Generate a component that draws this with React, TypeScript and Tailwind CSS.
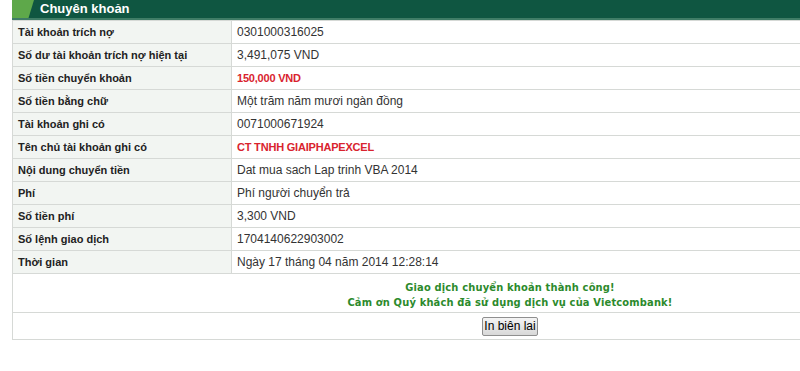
const rows: { label: string; value: string; red?: boolean }[] = [
  { label: "Tài khoản trích nợ", value: "0301000316025" },
  { label: "Số dư tài khoản trích nợ hiện tại", value: "3,491,075 VND" },
  { label: "Số tiền chuyển khoản", value: "150,000 VND", red: true },
  { label: "Số tiền bằng chữ", value: "Một trăm năm mươi ngàn đồng" },
  { label: "Tài khoản ghi có", value: "0071000671924" },
  { label: "Tên chủ tài khoản ghi có", value: "CT TNHH GIAIPHAPEXCEL", red: true },
  { label: "Nội dung chuyển tiền", value: "Dat mua sach Lap trinh VBA 2014" },
  { label: "Phí", value: "Phí người chuyển trả" },
  { label: "Số tiền phí", value: "3,300 VND" },
  { label: "Số lệnh giao dịch", value: "1704140622903002" },
  { label: "Thời gian", value: "Ngày 17 tháng 04 năm 2014 12:28:14" },
];

export default function App() {
  return (
    <div className="h-[371px] w-[800px] overflow-hidden bg-white pl-[12px] font-['Liberation_Sans',Arial,sans-serif] text-[12px] text-[#333]">
      <div className="w-[996px]">
        <div className="relative flex h-[20px] items-center overflow-hidden border-b-2 border-[#3f7d66] bg-[#0f5641]">
          <div className="absolute left-0 top-0 h-full w-[22px] bg-[#5ea84a] [clip-path:polygon(0_0,100%_0,75%_100%,0_100%)]" />
          <span className="relative pl-[28px] text-[13px] font-bold text-white">Chuyên khoản</span>
        </div>
        <table className="w-full border-collapse">
          <tbody>
            {rows.map((r) => (
              <tr key={r.label} className="h-[23px]">
                <td className="w-[219px] border border-[#d6d9d6] bg-[#f2f5f2] pl-[5px] text-[11px] font-bold text-[#222]">
                  {r.label}
                </td>
                <td
                  className={
                    r.red
                      ? "border border-[#d6d9d6] pl-[5px] text-[11px] font-bold tracking-[-0.2px] text-[#d9232e]"
                      : "border border-[#d6d9d6] pl-[5px]"
                  }
                >
                  {r.value}
                </td>
              </tr>
            ))}
            <tr className="h-[39px]">
              <td
                colSpan={2}
                className="border border-[#d6d9d6] pt-[4px] text-center font-['DejaVu_Sans_Condensed','DejaVu_Sans',Verdana,sans-serif] text-[11px] font-bold leading-[15px] tracking-[0.17px] text-[#2c8a2c]"
              >
                <div>Giao dịch chuyển khoản thành công!</div>
                <div>Cảm ơn Quý khách đã sử dụng dịch vụ của Vietcombank!</div>
              </td>
            </tr>
            <tr className="h-[27px]">
              <td colSpan={2} className="border border-[#d6d9d6] text-center">
                <button className="h-[19px] rounded-[2px] border border-[#8f8f8f] bg-gradient-to-b from-[#f4f4f4] to-[#d8d8d8] px-[1px] text-[12px] leading-[16px] text-black">
                  In biên lai
                </button>
              </td>
            </tr>
          </tbody>
        </table>
      </div>
    </div>
  );
}
